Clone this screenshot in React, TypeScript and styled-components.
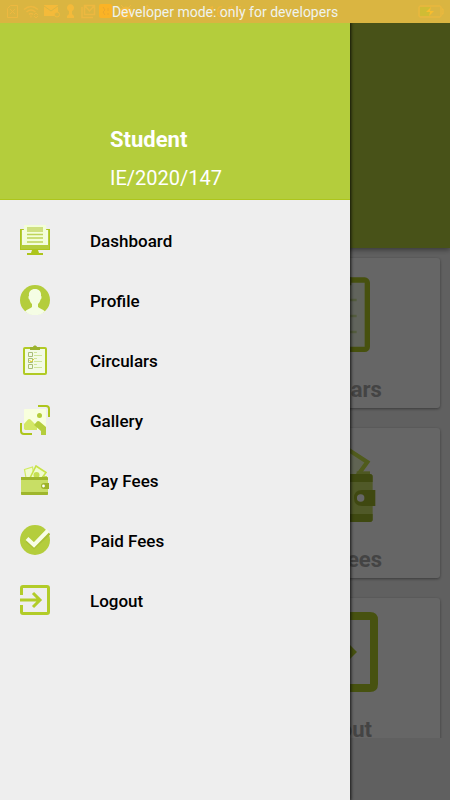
import React from "react";
import styled, { createGlobalStyle } from "styled-components";

const GlobalStyle = createGlobalStyle`
  * { box-sizing: border-box; }
  html, body, #root { height: 100%; }
  body { margin: 0; font-family: Roboto, sans-serif; background: #f0f0f0; }
`;

const lime = "#b4cd3c";
const olive = "#adc51c";

const Screen = styled.div`
  position: relative;
  min-height: 100vh;
  display: flex;
  flex-direction: column;
  overflow: hidden;
`;

const StatusBar = styled.header`
  position: relative;
  z-index: 3;
  height: 23px;
  padding: 0 6px;
  display: flex;
  align-items: center;
  justify-content: space-between;
  background: #dab541;
  color: #edb840;
`;

const StatusIcons = styled.div`
  display: flex;
  align-items: center;
`;

const StatusText = styled.span<{ $color: string }>`
  position: absolute;
  inset: 0;
  text-align: center;
  font-size: 14px;
  line-height: 24px;
  color: ${(p) => p.$color};
`;

const Body = styled.div`
  position: relative;
  flex: 1;
  display: flex;
  flex-direction: column;
`;

const Banner = styled.div`
  height: 225px;
  background: ${lime};
  box-shadow: 0 2px 5px rgba(0, 0, 0, 0.4);
  position: relative;
`;

const CardGrid = styled.main`
  height: 490px;
  overflow: hidden;
  padding: 10px;
  display: grid;
  grid-template-columns: 1fr 1fr;
  grid-auto-rows: 150px;
  gap: 20px;
`;

const Card = styled.button`
  border: 0;
  border-radius: 3px;
  background: #fff;
  box-shadow: 0 1px 3px rgba(0, 0, 0, 0.4);
  padding: 14px 0 0;
  display: flex;
  flex-direction: column;
  align-items: center;
  justify-content: flex-start;
  gap: 24px;
  font: 700 22px/28px Roboto, sans-serif;
  color: #aaa;
`;

const Scrim = styled.div`
  position: absolute;
  inset: 0;
  background: rgba(0, 0, 0, 0.6);
`;

const Drawer = styled.aside`
  position: absolute;
  top: 0;
  bottom: 0;
  left: 0;
  width: calc(100% - 100px);
  background: #eee;
  box-shadow: 0 0 3px 1px rgba(0, 0, 0, 0.8);
`;

const DrawerHeader = styled.div`
  height: 177px;
  padding: 0 20px 7px 110px;
  display: flex;
  flex-direction: column;
  justify-content: flex-end;
  gap: 10px;
  background: ${lime};
  border-bottom: 1px solid ${olive};
  color: #fff;
`;

const StudentName = styled.h1`
  margin: 0;
  font-size: 22px;
  line-height: 28px;
  font-weight: 700;
`;

const StudentId = styled.p`
  margin: 0;
  font-size: 20px;
  line-height: 28px;
`;

const Menu = styled.nav`
  padding-top: 10px;
  display: flex;
  flex-direction: column;
`;

const MenuItem = styled.a`
  height: 60px;
  padding: 0 20px;
  display: flex;
  align-items: center;
  gap: 40px;
  color: #000;
  font-size: 17px;
  font-weight: 500;
  line-height: 24px;
  text-decoration: none;
`;

const MenuLabel = styled.span`
  padding-top: 2px;
`;

type IconProps = { size: number };

const DashboardIcon = ({ size }: IconProps) => (
  <svg width={size} height={size} viewBox="0 0 30 30" aria-hidden="true">
    <path d="M0 4h30v21H0z" fill={lime} />
    <path d="M0 4h3v1H1v19h28V5h-2V4h3v21H0z" fill={olive} />
    <path d="M2 5h26v15H2z" fill="#f4fbe5" />
    <path d="M4 0h22v19H4z" fill="#f3fed8" />
    <path d="M7 2h16v5H7z" fill="#cfe080" />
    <path d="M7 9.5h16M7 13h16M7 17h16" stroke="#bed45a" strokeWidth="1.6" />
    <path d="M12 25h6l1 3h4v2H7v-2h4z" fill={olive} />
  </svg>
);

const ProfileIcon = ({ size }: IconProps) => (
  <svg width={size} height={size} viewBox="0 0 30 30" aria-hidden="true">
    <circle cx="15" cy="15" r="15" fill={lime} />
    <path
      d="M15 4c-4.500 0-6.500 3-6 7-.8 0-.7 3 .5 3.500.4 2 1.500 3.500 2.500 4.500v3c-1.500 1.800-5 2-7 4.500a15 15 0 0 0 20 0c-2-2.500-5.500-2.700-7-4.500v-3c1-1 2.100-2.500 2.500-4.500 1.200-.5 1.300-3.500.5-3.500.5-4-1.500-7-6-7z"
      fill="#f5fde4"
    />
  </svg>
);

const CircularsIcon = ({ size }: IconProps) => (
  <svg width={size} height={size} viewBox="0 0 30 30" aria-hidden="true">
    <rect x="4" y="3" width="22" height="26" rx="1" fill="#f3fbe6" stroke="#b1ca24" strokeWidth="2" />
    <path d="M10 2h3c.4-2 3.600-2 4 0h3v3H10z" fill="#9bb22e" />
    {[7.5, 13.5, 19.5].map((y) => (
      <g key={y} fill="none">
        <path d={`M8.500 ${y}h4v4h-4z`} stroke="#a9bd78" />
        <path d={`M14 ${y}h3M14 ${y + 3}h8`} stroke="#cfe59a" />
      </g>
    ))}
    <path d="m9.500 15 1.500 2 3-3" fill="none" stroke="#e7d230" />
  </svg>
);

const GalleryIcon = ({ size }: IconProps) => (
  <svg width={size} height={size} viewBox="0 0 30 30" aria-hidden="true">
    <path d="M18 1h8q3 0 3 3v8M1 18v8q0 3 3 3h8" fill="none" stroke={olive} strokeWidth="2" />
    <rect x="4" y="4" width="22" height="21" rx="1" fill="#f8ffdd" />
    <circle cx="19.500" cy="10.500" r="2.500" fill={lime} />
    <path d="M4 19l4-4.500q1-1 2.500 0L17 21v4H5l-1-1z" fill="#d3e766" />
    <path d="m14 20 3-3.500q1-1 2.500 0L26 22v8h-5v-4z" fill={lime} />
  </svg>
);

const WalletIcon = ({ size }: IconProps) => (
  <svg width={size} height={size} viewBox="0 0 30 30" aria-hidden="true">
    <path d="m4.500 4.500 8-2.500 2 11H6z" fill="#f1fbd0" stroke="#d0ea60" strokeWidth="1.200" />
    <path d="m16 1 10 6.500-4 5.500H10z" fill="#f1fbd0" stroke="#c8e348" strokeWidth="1.600" />
    <circle cx="16.500" cy="10" r="3" fill="#c5df51" />
    <path d="M22 11h5v3h-5z" fill="#c2dc55" />
    <rect x="1" y="12" width="27" height="18" rx="1" fill="#c8de65" />
    <path d="M1 12h26q1 0 1 1v2H1zM1 27h27v2q0 1-1 1H2q-1 0-1-1z" fill="#9fb62c" />
    <path d="M29 18h-5q-3 0-3 3t3 3h5z" fill="#9eb329" />
    <circle cx="23.500" cy="21" r="1.400" fill="#fff" />
  </svg>
);

const PaidIcon = ({ size }: IconProps) => (
  <svg width={size} height={size} viewBox="0 0 30 30" aria-hidden="true">
    <circle cx="15" cy="15" r="15" fill={lime} />
    <path d="m7 15.500 7 6L29 8" fill="none" stroke="#a9c034" strokeWidth="4" />
    <path d="m7 13.500 7 6.500L28 5.500" fill="none" stroke="#f7fde6" strokeWidth="4" />
  </svg>
);

const LogoutIcon = ({ size }: IconProps) => (
  <svg width={size} height={size} viewBox="0 0 30 30" aria-hidden="true">
    <path
      d="M1.500 10V3q0-1.500 1.500-1.500h24q1.500 0 1.500 1.500v24q0 1.500-1.500 1.500H3Q1.500 28.500 1.500 27v-7M0 15h19M13 8l7 7-7 7"
      fill="none"
      stroke="#b2cc28"
      strokeWidth="3"
    />
  </svg>
);

const BatteryIcon = () => (
  <svg width="26" height="14" viewBox="0 0 26 14" aria-label="Battery charging">
    <rect x="1" y="1" width="22" height="11" rx="1" fill="none" stroke="#f0b93c" />
    <path d="M2 2h10v9H2z" fill="#d0bc34" />
    <path d="M24 4h1v5h-1" fill="none" stroke="#f0b93c" />
    <path d="m13 2-5 5h4l-1 4 5-5h-4z" fill="#f8bd2e" />
  </svg>
);

const NotificationIcons = () => (
  <svg width="152" height="16" viewBox="6 4 152 16" aria-label="Notifications" fill="none" stroke="#edb840">
    <path d="M10.500 5.500h7v12h-10v-9zM10 9l5 5M15 9l-5 5" />
    <path d="M24 9.500q7-6 14 0M26.500 12q4.500-4 9 0M29 14.500q2-2 4 0" strokeWidth="1.500" />
    <path d="M31 15.500v2M34 15l2-2 2 2M34 16l2 2 2-2" />
    <path d="M44 5h14v11H44z" fill="#f4ba3a" stroke="none" />
    <path d="m44 6 7 5 7-5" stroke="#dab541" />
    <circle cx="57" cy="14.500" r="2.500" fill="#dab541" stroke="#f4ba3a" />
    <path d="M67 18v-2l2-2v-3a3.500 3.500 0 1 1 3 0v3l2 2v2z" fill="#f4ba3a" stroke="none" />
    <path d="M82 7v10.500h11M84.500 5.500h10v9h-10zM85 6l4.500 5L94 6" strokeWidth="1.500" />
    <rect x="99" y="4" width="13" height="14" rx="2" fill="#fbb325" stroke="none" />
    <path d="m103 7 2 3-2 2 2 3M108 8v3M108 13v2" stroke="#eba82c" />
    <path d="M120 10q6-6 12 0v8h-12zM121 5l3 3M131 5l-3 3" fill="#f4ba3a" />
    <path d="M147 5v13M143 8l7 6-3 3M143 14l7-5-3-4" />
  </svg>
);

const items = [
  { label: "Dashboard", Icon: DashboardIcon },
  { label: "Profile", Icon: ProfileIcon },
  { label: "Circulars", Icon: CircularsIcon },
  { label: "Gallery", Icon: GalleryIcon },
  { label: "Pay Fees", Icon: WalletIcon },
  { label: "Paid Fees", Icon: PaidIcon },
  { label: "Logout", Icon: LogoutIcon },
];

const cards = items.slice(1);

export default function App() {
  return (
    <Screen>
      <GlobalStyle />
      <StatusBar>
        <StatusIcons>
          <NotificationIcons />
        </StatusIcons>
        <StatusText $color="#efb63a">16:16</StatusText>
        <StatusText $color="#eff3ee">Developer mode: only for developers</StatusText>
        <BatteryIcon />
      </StatusBar>
      <Body>
        <Banner />
        <CardGrid>
          {cards.map(({ label, Icon }) => (
            <Card key={label} type="button" tabIndex={-1}>
              <Icon size={80} />
              {label}
            </Card>
          ))}
        </CardGrid>
        <Scrim />
        <Drawer>
          <DrawerHeader>
            <StudentName>Student</StudentName>
            <StudentId>IE/2020/147</StudentId>
          </DrawerHeader>
          <Menu>
            {items.map(({ label, Icon }) => (
              <MenuItem key={label} href="#">
                <Icon size={30} />
                <MenuLabel>{label}</MenuLabel>
              </MenuItem>
            ))}
          </Menu>
        </Drawer>
      </Body>
    </Screen>
  );
}
